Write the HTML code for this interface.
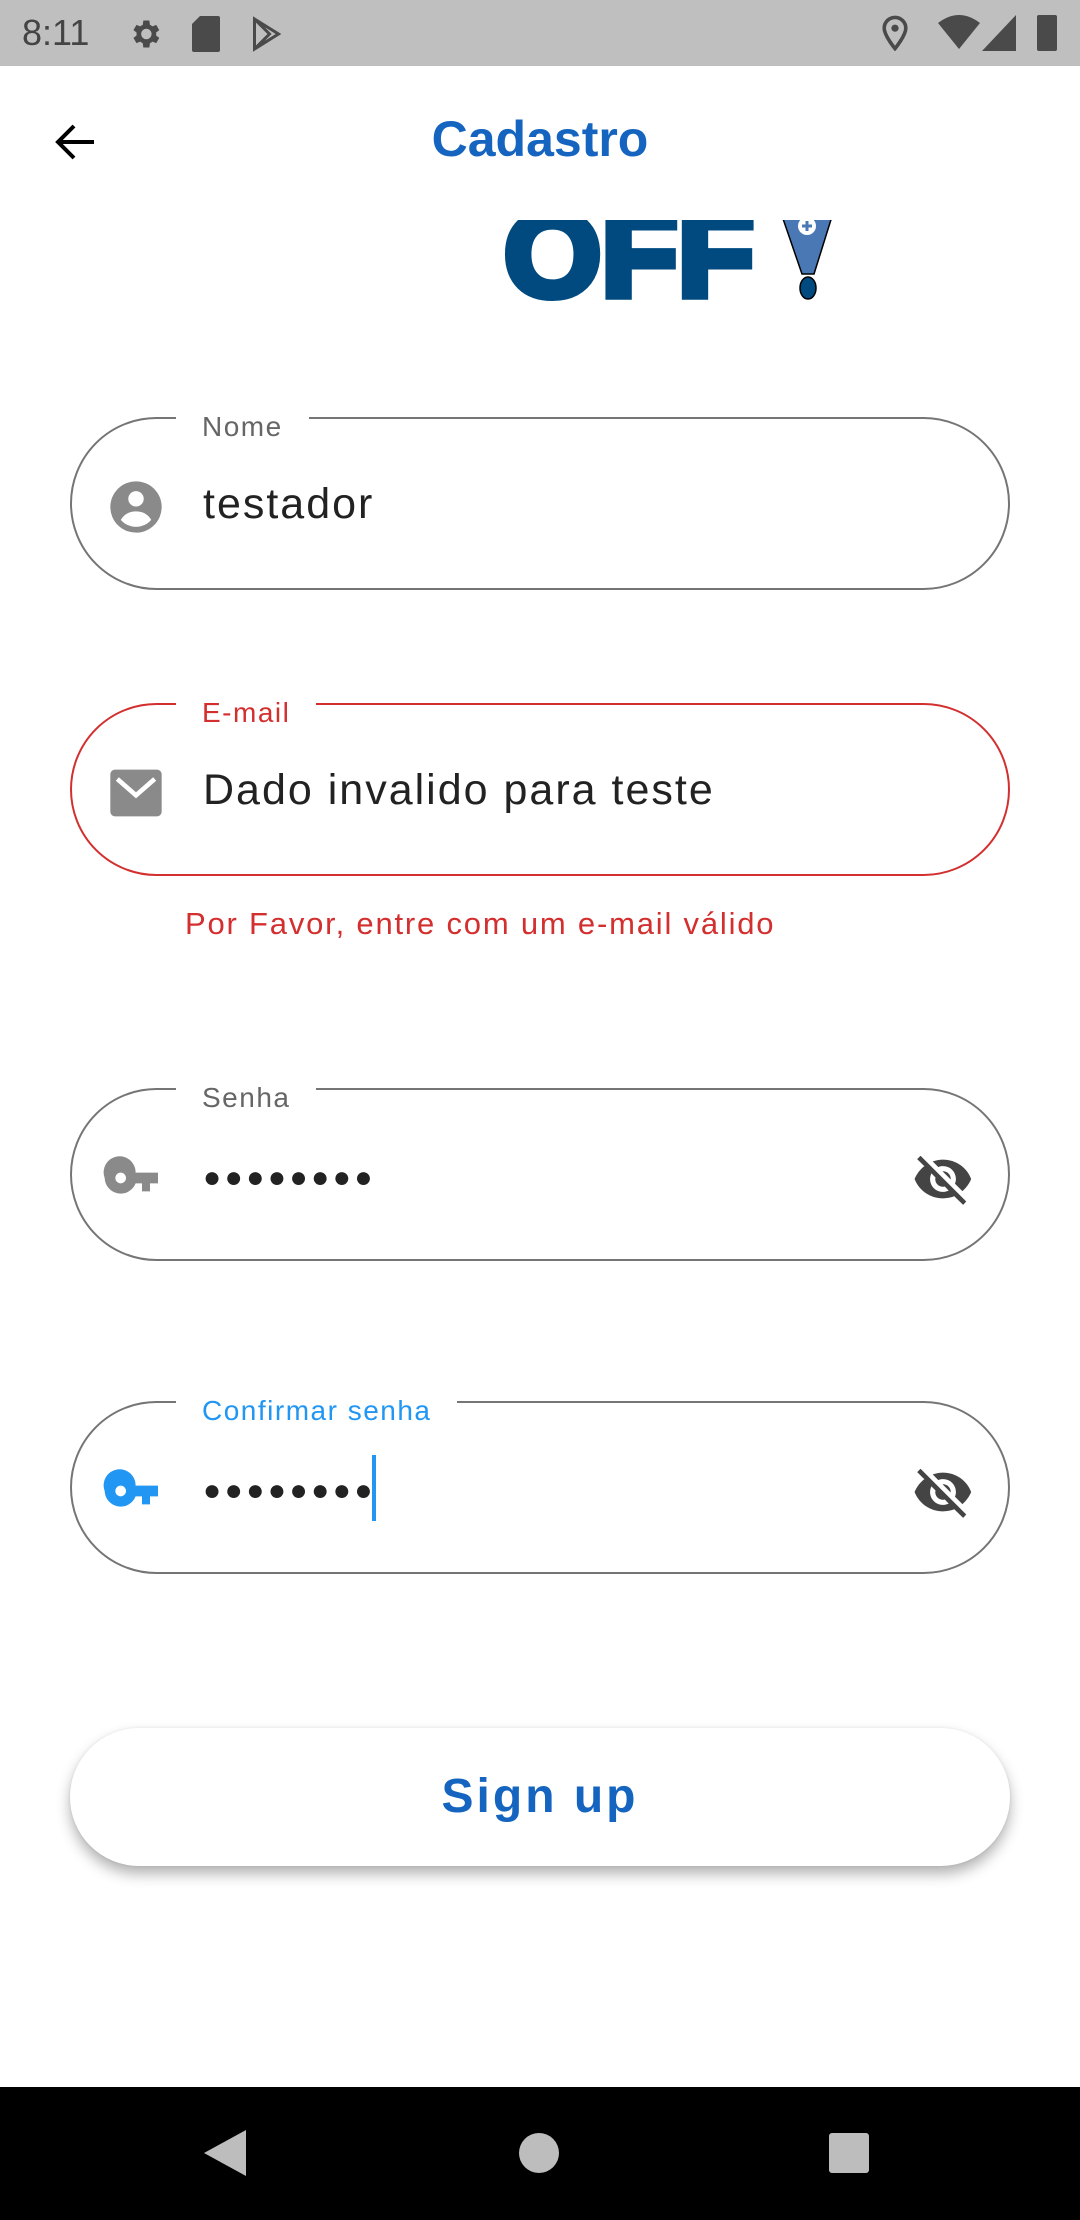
<!DOCTYPE html>
<html><head><meta charset="utf-8"><style>
*{margin:0;padding:0;box-sizing:border-box}
body{width:1080px;height:2220px;background:#fff;position:relative;overflow:hidden;font-family:"Liberation Sans",sans-serif}
.abs{position:absolute}
.status{left:0;top:0;width:1080px;height:66px;background:#bfbfbf}
.field{position:absolute;left:70px;width:940px;height:173px;border:2px solid #757575;border-radius:87px}
.label{position:absolute;top:-9px;left:104px;padding:0 26px;background:#fff;font-size:28px;color:#666;line-height:34px;letter-spacing:1.5px}
.val{position:absolute;left:131px;top:60px;font-size:43px;color:#222;line-height:50px;letter-spacing:2px}
.icon{position:absolute;left:36px;top:60px;width:56px;height:56px}
.eye{position:absolute;right:34px;top:58px;width:62px;height:62px}
.dots{position:absolute;left:131px;top:66px;font-size:30px;letter-spacing:3.5px;color:#222;line-height:44px}
</style></head><body>
<div class="abs status"></div>
<div class="abs" style="left:22px;top:12px;font-size:36px;color:#444">8:11</div>
<svg class="abs" style="left:125px;top:16px" width="40" height="36" viewBox="0 0 24 24"><path fill="#4a4a4a" d="M19.4 13a7.5 7.5 0 000-2l2.1-1.6-2-3.5-2.5 1a7 7 0 00-1.7-1L14.9 3h-4l-.4 2.9a7 7 0 00-1.7 1l-2.5-1-2 3.5L6.4 11a7.5 7.5 0 000 2l-2.1 1.6 2 3.5 2.5-1a7 7 0 001.7 1l.4 2.9h4l.4-2.9a7 7 0 001.7-1l2.5 1 2-3.5zM12.9 15.5a3.5 3.5 0 110-7 3.5 3.5 0 010 7z"/></svg>
<svg class="abs" style="left:192px;top:16px" width="28" height="36" viewBox="0 0 14 18"><path fill="#4a4a4a" d="M4 0h9a1 1 0 011 1v16a1 1 0 01-1 1H1a1 1 0 01-1-1V4z"/></svg>
<svg class="abs" style="left:250px;top:16px" width="36" height="36" viewBox="0 0 24 24"><path fill="none" stroke="#4a4a4a" stroke-width="2" d="M3 2l16 10L3 22z M3 2l10 10L3 22"/></svg>
<svg class="abs" style="left:880px;top:15px" width="30" height="36" viewBox="0 0 24 30"><path fill="none" stroke="#4a4a4a" stroke-width="3" d="M12 28S3 17 3 11a9 9 0 0118 0c0 6-9 17-9 17z"/><circle cx="12" cy="11" r="3" fill="#4a4a4a"/></svg>
<svg class="abs" style="left:938px;top:15px" width="42" height="36" viewBox="0 0 42 36"><path fill="#4a4a4a" d="M0 8Q21-8 42 8L21 34z"/></svg>
<svg class="abs" style="left:982px;top:15px" width="34" height="36"><path fill="#4a4a4a" d="M34 0V36H0z"/></svg>
<div class="abs" style="left:1037px;top:15px;width:20px;height:36px;background:#4a4a4a;border-radius:2px"></div>
<svg class="abs" style="left:52px;top:118px" width="48" height="48" viewBox="0 0 24 24"><path fill="none" stroke="#000" stroke-width="2" d="M21 12H4M11 4l-8 8 8 8"/></svg>
<div class="abs" style="left:0;width:1080px;top:110px;text-align:center;font-size:50px;font-weight:bold;color:#1565c0">Cadastro</div>
<div class="abs" style="left:490px;top:220px;width:360px;height:82px;overflow:hidden">
<svg width="360" height="82" viewBox="0 0 360 82"><text x="14" y="76" font-family="Liberation Sans" font-weight="bold" font-size="120" fill="#004a80" stroke="#004a80" stroke-width="8" textLength="250" lengthAdjust="spacingAndGlyphs">OFF</text>
<path d="M290 -10h54l-20 64h-12z" fill="#4a78b4" stroke="#000" stroke-width="1.5"/>
<circle cx="317" cy="6" r="9" fill="#fff"/><path d="M317 1v10M312 6h10" stroke="#4a78b4" stroke-width="3"/>
<ellipse cx="318" cy="68" rx="8" ry="11" fill="#004a80" stroke="#000" stroke-width="1.5"/></svg></div>

<div class="field" style="top:417px"><div class="label">Nome</div>
<svg class="icon" viewBox="0 0 24 24"><circle cx="12" cy="12" r="11" fill="#8a8a8a"/><circle cx="12" cy="8.5" r="3.3" fill="#fff"/><path d="M5.5 17.5c1.5-2.6 4-3.6 6.5-3.6s5 1 6.5 3.6a8.5 8.5 0 01-13 0z" fill="#fff"/></svg>
<div class="val">testador</div></div>

<div class="field" style="top:703px;border-color:#d32f2f"><div class="label" style="color:#d32f2f">E-mail</div>
<svg class="icon" viewBox="0 0 24 24"><rect x="1" y="2" width="22" height="20" rx="2" fill="#8a8a8a"/><path d="M4 6l8 7 8-7" fill="none" stroke="#fff" stroke-width="2"/></svg>
<div class="val">Dado invalido para teste</div></div>
<div class="abs" style="left:185px;top:906px;font-size:31px;color:#d32f2f;letter-spacing:1.8px">Por Favor, entre com um e-mail válido</div>

<div class="field" style="top:1088px"><div class="label">Senha</div>
<svg class="icon" style="left:30px;top:56px;width:64px;height:64px" viewBox="0 0 24 24"><path fill="#8a8a8a" d="M12.6 10A6 6 0 101 12a6 6 0 0011.6 2H15v3h3v-3h3v-4zM7 14a2 2 0 110-4 2 2 0 010 4z"/></svg>
<div class="dots">●●●●●●●●</div>
<svg class="eye" viewBox="0 0 24 24"><path fill="#444" d="M12 7c2.8 0 5 2.2 5 5 0 .6-.1 1.3-.4 1.8l2.9 2.9c1.5-1.3 2.7-2.9 3.4-4.7C21.3 7.6 17 4.5 12 4.5c-1.4 0-2.7.3-4 .7l2.2 2.2C10.7 7.1 11.3 7 12 7zM2 4.3l2.3 2.3.5.4C3.1 8.3 1.8 10 1 12c1.7 4.4 6 7.5 11 7.5 1.6 0 3-.3 4.4-.8l.4.4 3 2.9 1.2-1.3L3.3 3zM7.5 9.8l1.6 1.6c0 .2-.1.4-.1.6 0 1.7 1.3 3 3 3 .2 0 .4 0 .7-.1l1.5 1.6c-.7.3-1.4.5-2.2.5-2.8 0-5-2.2-5-5 0-.8.2-1.5.5-2.2zm4.3-.8l3.2 3.2V12c0-1.7-1.3-3-3-3z"/></svg></div>

<div class="field" style="top:1401px"><div class="label" style="color:#2196f3">Confirmar senha</div>
<svg class="icon" style="left:30px;top:56px;width:64px;height:64px" viewBox="0 0 24 24"><path fill="#2196f3" d="M12.6 10A6 6 0 101 12a6 6 0 0011.6 2H15v3h3v-3h3v-4zM7 14a2 2 0 110-4 2 2 0 010 4z"/></svg>
<div class="dots">●●●●●●●●</div>
<div class="abs" style="left:300px;top:52px;width:4px;height:66px;background:#2196f3"></div>
<svg class="eye" viewBox="0 0 24 24"><path fill="#444" d="M12 7c2.8 0 5 2.2 5 5 0 .6-.1 1.3-.4 1.8l2.9 2.9c1.5-1.3 2.7-2.9 3.4-4.7C21.3 7.6 17 4.5 12 4.5c-1.4 0-2.7.3-4 .7l2.2 2.2C10.7 7.1 11.3 7 12 7zM2 4.3l2.3 2.3.5.4C3.1 8.3 1.8 10 1 12c1.7 4.4 6 7.5 11 7.5 1.6 0 3-.3 4.4-.8l.4.4 3 2.9 1.2-1.3L3.3 3zM7.5 9.8l1.6 1.6c0 .2-.1.4-.1.6 0 1.7 1.3 3 3 3 .2 0 .4 0 .7-.1l1.5 1.6c-.7.3-1.4.5-2.2.5-2.8 0-5-2.2-5-5 0-.8.2-1.5.5-2.2zm4.3-.8l3.2 3.2V12c0-1.7-1.3-3-3-3z"/></svg></div>

<div class="abs" style="left:70px;top:1728px;width:940px;height:138px;border-radius:69px;background:#fff;box-shadow:0 8px 14px rgba(0,0,0,.3),0 0 3px rgba(0,0,0,.08);text-align:center;line-height:138px;font-size:48px;font-weight:bold;color:#1565c0;letter-spacing:3px">Sign up</div>

<div class="abs" style="left:0;top:2087px;width:1080px;height:133px;background:#000"></div>
<svg class="abs" style="left:204px;top:2130px" width="44" height="46"><path d="M42 0V46L0 23z" fill="#bdbdbd"/></svg>
<div class="abs" style="left:519px;top:2133px;width:40px;height:40px;border-radius:50%;background:#bdbdbd"></div>
<div class="abs" style="left:829px;top:2133px;width:40px;height:40px;border-radius:3px;background:#bdbdbd"></div>
</body></html>
